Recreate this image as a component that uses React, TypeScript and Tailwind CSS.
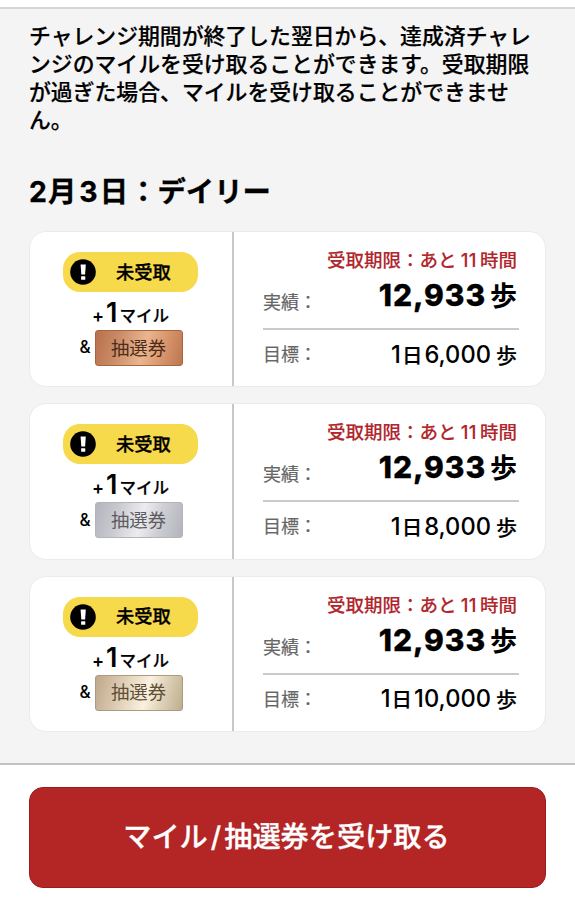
type Challenge = { id: number; actual: string; goal: string; ticket: string };

const challenges: Challenge[] = [
  {
    id: 1,
    actual: "12,933",
    goal: "6,000",
    ticket:
      "border-[#a5653f] text-[#4d2c1b] bg-[linear-gradient(105deg,#b9714b_0%,#c98a66_25%,#eab68f_55%,#dd9c72_72%,#bd7650_100%)]",
  },
  {
    id: 2,
    actual: "12,933",
    goal: "8,000",
    ticket:
      "border-[#b3b3ba] text-[#5c5c60] bg-[linear-gradient(105deg,#b4b4bd_0%,#c9c9d0_25%,#ececf0_52%,#cfcfd5_72%,#b3b3bc_100%)]",
  },
  {
    id: 3,
    actual: "12,933",
    goal: "10,000",
    ticket:
      "border-[#a99a80] text-[#5f4e38] bg-[linear-gradient(105deg,#bfa78a_0%,#d8c7ad_25%,#fbf1df_58%,#ddd0b5_77%,#bdae8f_100%)]",
  },
];

export default function App() {
  return (
    <div className="flex h-[914px] w-[575px] flex-col overflow-hidden bg-white font-['Inter','Noto_Sans_CJK_JP',sans-serif] text-black">
      <main className="mt-[7px] h-[756px] border-t-2 border-[#d6d6d6] bg-[#f4f4f4] px-[29px] pt-[13px]">
        <p className="text-[21.85px] leading-7 font-medium whitespace-nowrap [-webkit-text-stroke:0.2px]">
          チャレンジ期間が終了した翌日から、達成済チャレ
          <br />
          ンジのマイルを受け取ることができます。受取期限
          <br />
          が過ぎた場合、マイルを受け取ることができませ
          <br />
          ん。
        </p>
        <h1 className="mt-[38px] text-[28.4px] leading-10 font-bold [-webkit-text-stroke:0.3px]">
          2<span className="pr-[3px] pl-px">月</span>3
          <span className="pr-px pl-[2px]">日</span>：デイリー
        </h1>
        <div className="mt-[19px] grid gap-4">
          {challenges.map((c) => (
            <ChallengeCard key={c.id} challenge={c} />
          ))}
        </div>
      </main>

      <footer className="flex-1 border-t-2 border-[#c2c2c2] px-[29px] pt-[22px]">
        <button className="flex h-[101px] w-[517px] items-center justify-center rounded-[14px] border border-[#9c1c1c] bg-[#b42525] pr-[2px] text-[28.2px] font-medium text-white [-webkit-text-stroke:0.3px]">
          マイル<span className="px-[3px]">/</span>抽選券を受け取る
        </button>
      </footer>
    </div>
  );
}

function ChallengeCard({ challenge }: { challenge: Challenge }) {
  return (
    <section className="flex h-[156.3px] w-[517px] rounded-[17px] border border-[#ebebeb] bg-white">
      <div className="flex w-[204px] flex-col items-center border-r-2 border-[#c8c8c8] pt-5 pr-px">
        <div className="flex h-10 w-[135px] items-center rounded-[17px] bg-[#f7d94c] pl-[7px]">
          <WarningIcon />
          <span className="ml-5 text-[18.3px] leading-none font-medium [-webkit-text-stroke:0.3px]">
            未受取
          </span>
        </div>
        <div className="flex h-[38px] items-baseline pt-px leading-[39px] font-semibold">
          <span className="mr-[2px] text-[18px]">+</span>
          <span className="text-[27px]">1</span>
          <span className="ml-[2px] text-[16.5px] font-medium [-webkit-text-stroke:0.2px]">
            マイル
          </span>
        </div>
        <div className="flex items-center gap-1 pl-px">
          <span className="text-[17px] font-medium">&amp;</span>
          <span
            className={`flex h-9 w-[88px] items-center justify-center rounded-[3px] border text-[18.4px] leading-none font-normal ${challenge.ticket}`}
          >
            抽選券
          </span>
        </div>
      </div>

      <div className="flex-1 pt-[16px] pr-[26px] pl-[29px]">
        <p className="pr-[2px] text-right text-[18.5px] leading-6 font-medium whitespace-nowrap text-[#b0262b] [-webkit-text-stroke:0.1px]">
          受取期限：あと<span className="pr-[3px] pl-[4px] tracking-[0.5px]">11</span>時間
        </p>
        <div className="flex h-[58px] justify-between border-b-2 border-[#cacaca] pr-[2px]">
          <span className="pt-[17px] text-[18px] leading-7 text-[#666] [-webkit-text-stroke:0.2px]">
            実績：
          </span>
          <p className="flex items-baseline text-[30px] leading-[47px] font-extrabold">
            <span className="tracking-[0.9px] [-webkit-text-stroke:0.3px]">{challenge.actual}</span>
            <span className="ml-[4px] text-[27px] font-bold">歩</span>
          </p>
        </div>
        <div className="flex h-[49px] items-center justify-between pr-[2px]">
          <span className="text-[18px] text-[#666] [-webkit-text-stroke:0.2px]">目標：</span>
          <p className="flex items-baseline text-[23.7px] leading-none font-medium">
            1
            <span className="mr-[2px] ml-px text-[20.5px] [-webkit-text-stroke:0.2px]">日</span>
            {challenge.goal}
            <span className="ml-[5px] text-[21px] [-webkit-text-stroke:0.2px]">歩</span>
          </p>
        </div>
      </div>
    </section>
  );
}

function WarningIcon() {
  return (
    <svg className="size-[26px]" viewBox="0 0 26 26">
      <circle cx="13" cy="13" r="12.8" fill="#000" />
      <path d="M10.6 5.4h5.2l-.7 10.1h-3.8z" fill="#fff" />
      <rect x="11.1" y="17.2" width="4.2" height="3.6" rx=".6" fill="#fff" />
    </svg>
  );
}
